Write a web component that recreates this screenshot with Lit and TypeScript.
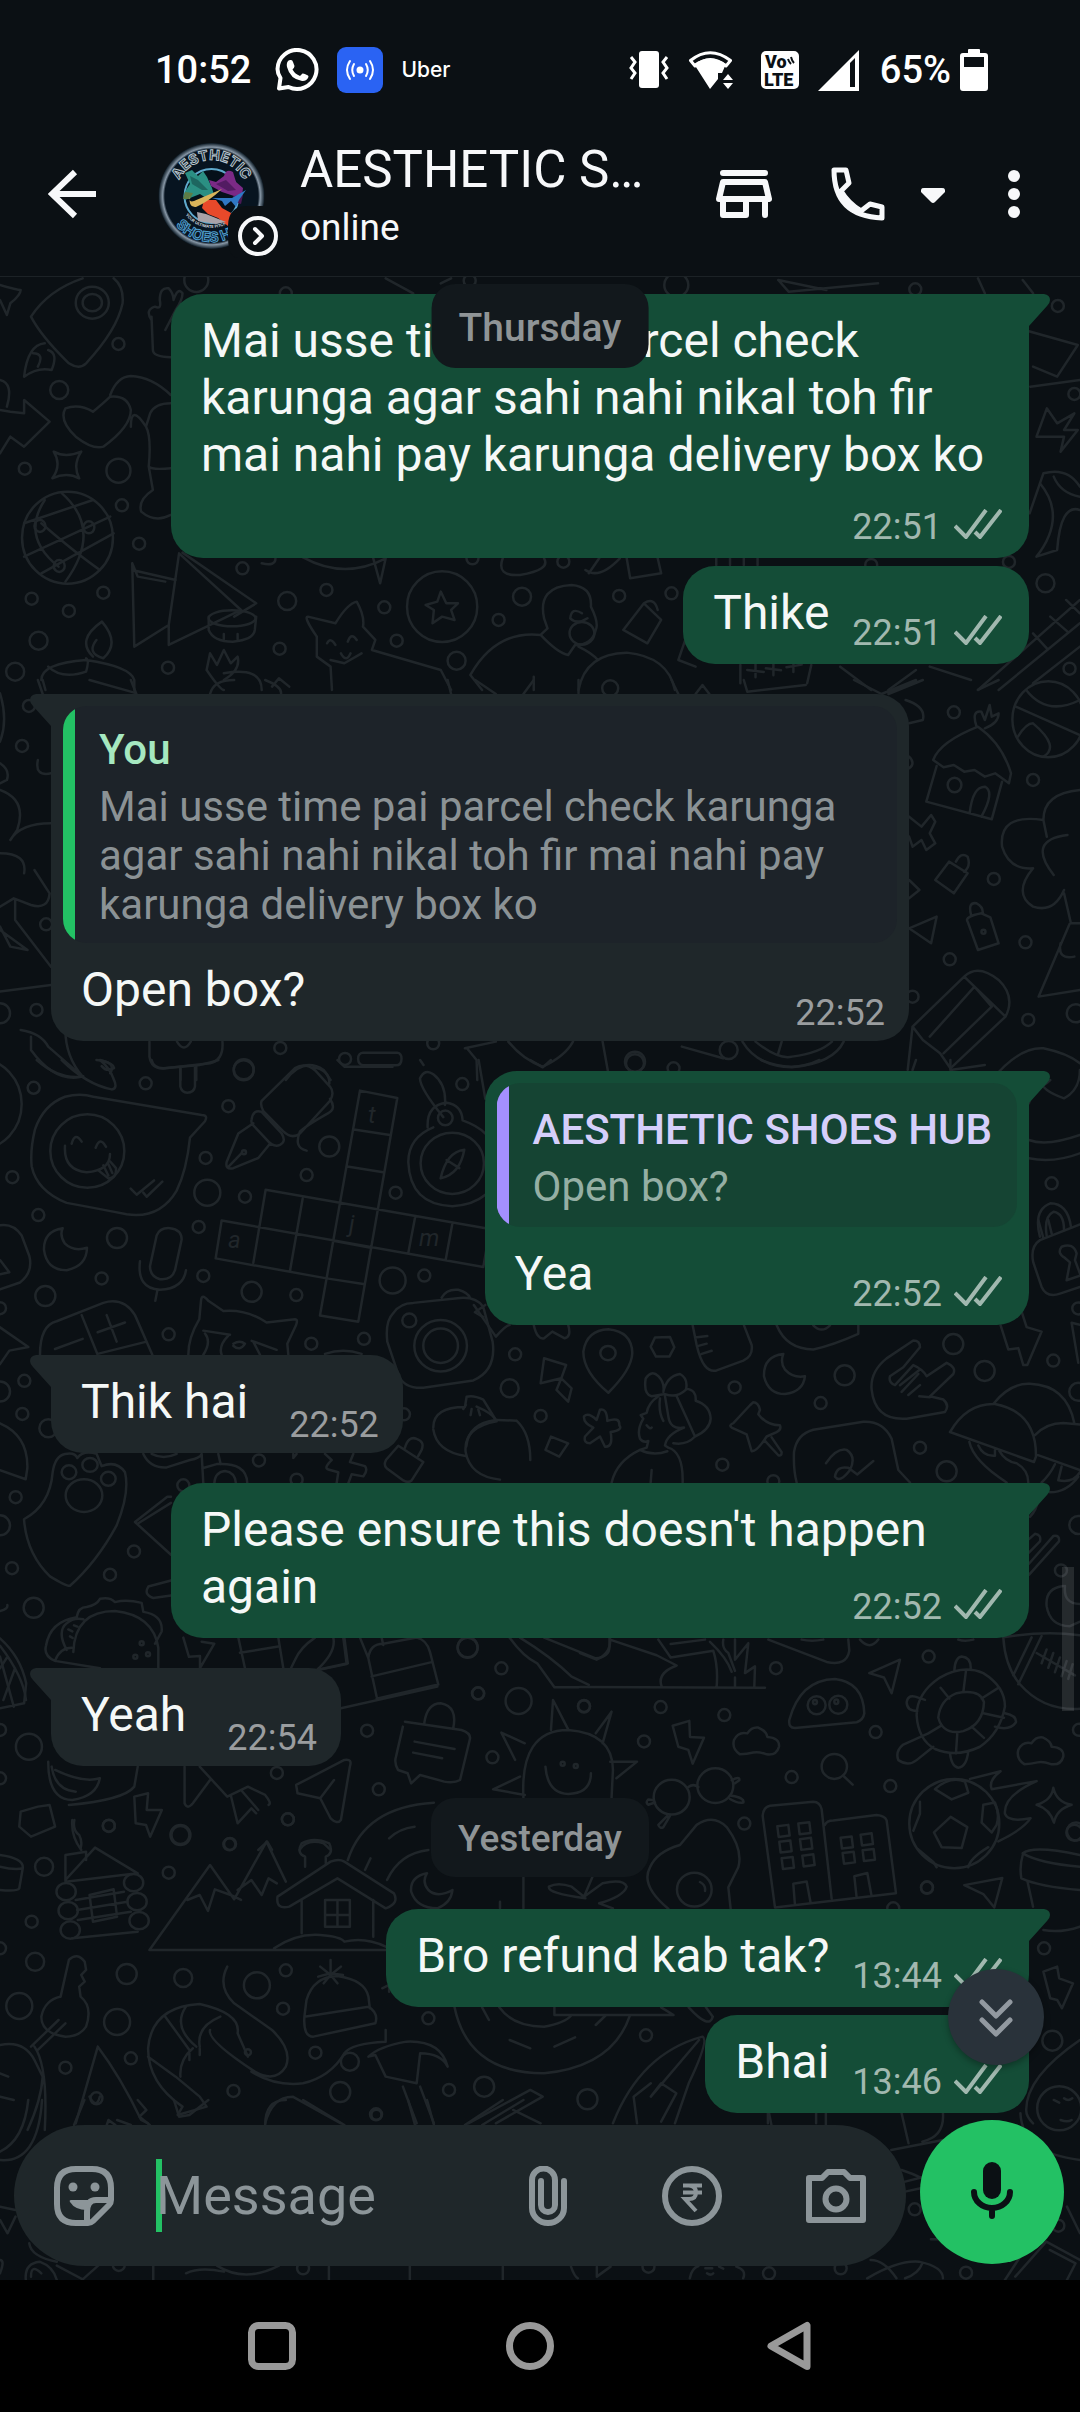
import { LitElement, html, svg, css, nothing } from "lit";
import { customElement, property } from "lit/decorators.js";

interface Quote {
  author: string;
  text: string;
}

interface Message {
  kind: "in" | "out" | "day";
  text: string;
  time?: string;
  tail?: boolean;
  quote?: Quote;
  /** Where the time goes: beside the text, over its last line, or below it. */
  meta?: "beside" | "over" | "below";
}

const MESSAGES: Message[] = [
  {
    kind: "out",
    text: "Mai usse time pai parcel check karunga agar sahi nahi nikal toh fir mai nahi pay karunga delivery box ko",
    time: "22:51",
    tail: true,
    meta: "below",
  },
  { kind: "out", text: "Thike", time: "22:51" },
  {
    kind: "in",
    text: "Open box?",
    time: "22:52",
    tail: true,
    quote: {
      author: "You",
      text: "Mai usse time pai parcel check karunga agar sahi nahi nikal toh fir mai nahi pay karunga delivery box ko",
    },
  },
  {
    kind: "out",
    text: "Yea",
    time: "22:52",
    tail: true,
    quote: { author: "AESTHETIC SHOES HUB", text: "Open box?" },
  },
  { kind: "in", text: "Thik hai", time: "22:52", tail: true },
  { kind: "out", text: "Please ensure this doesn't happen again", time: "22:52", tail: true, meta: "over" },
  { kind: "in", text: "Yeah", time: "22:54", tail: true },
  { kind: "day", text: "Yesterday" },
  { kind: "out", text: "Bro refund kab tak?", time: "13:44", tail: true },
  { kind: "out", text: "Bhai", time: "13:46" },
];

/** One patch of the doodle wallpaper: its origin, its scale and its line art. */
interface Patch {
  x: number;
  y: number;
  sx: number;
  sy: number;
  lines: string;
  rings: number[][];
  ellipses: number[][];
}

const PATCHES: Patch[] = [
  {
    x: 0, y: 270, sx: 0.6887, sy: 0.3333,
    lines: `M120 25Q70 60 45 140Q60 200 100 280Q115 300 125 280Q170 180 178 100Q180 50 165 25
      M65 220Q40 225 35 320Q55 290 75 300Q85 250 70 240M48 250Q65 250 55 290
      M220 150Q210 120 225 110Q235 120 232 90Q232 50 245 55Q252 70 252 90Q258 50 265 70Q265 90 255 120L240 180M220 140L222 240Q222 260 248 262
      M0 45Q25 60 30 60Q30 75 15 100L10 135L0 90
      M135 425Q115 400 95 415Q85 450 110 500Q135 540 150 530Q190 470 190 420Q185 375 160 380Q150 400 135 425M160 375Q170 320 190 318Q220 320 248 375
      M248 400Q225 400 218 430L212 470Q190 400 190 470M212 470Q220 500 216 590Q220 600 248 595M216 590L222 660Q200 690 205 725Q225 760 248 735
      M0 550L15 500L35 530L72 455L35 390V430L15 425L0 420M0 330Q20 340 10 410
      M78 545Q95 565 118 545Q105 585 115 625Q97 605 76 625Q90 585 78 545Z
      M65 690Q30 800 85 890M90 670Q150 780 95 935M35 760L135 690M35 860L160 740M60 910L165 790M60 760Q110 850 145 900
      M192 880L195 1130L245 1065L260 850L350 1020L300 1070L245 1125V1065M192 900L255 930M265 848L372 1000L340 1040M192 880L200 920L240 935
      M303 1040V1080Q310 1115 338 1115Q368 1110 370 1080L372 1040M325 1092v16M345 1092v16
      M60 1230Q60 1180 125 1170Q190 1190 195 1230V1260M62 1230L66 1260M70 1190Q90 1230 125 1205Q130 1170 125 1165
      M135 1160Q110 1110 148 1055Q175 1120 150 1165Q125 1150 140 1110
      M300 1200L305 1150L315 1185L325 1140L335 1180L345 1160Q350 1200 325 1230M300 1200Q320 1260 325 1260M325 1210Q380 1190 380 1260M395 1250L405 1225L420 1250
      M460 1100Q440 1040 447 1040L487 1060Q505 1000 518 995Q530 1040 527 1070L545 1110L540 1140L640 1200L655 1260M460 1100V1160L480 1190L482 1260M475 1120Q480 1100 487 1125M505 1115Q510 1085 518 1110M495 1150q8 30 14 0M480 1170L500 1180L525 1150
      M640 965L648 1000L665 1000L655 1020L660 1050L642 1040L628 1060L630 1020L618 1005L635 995Z
      M790 1045Q780 950 830 945Q860 950 858 1010Q870 1060 865 1080Q860 1125 835 1125L825 1155Q810 1150 785 1095Q720 1080 683 1215L700 1260M790 1045L795 1075L785 1095M840 1130Q860 1150 868 1170M840 1260Q850 1150 910 1148Q970 1160 980 1260M845 1030Q830 1010 828 1045q10 20 25 0M775 1220V1260
      M380 880Q400 890 400 865M440 862Q500 930 560 865L552 940L542 865M730 865Q720 920 755 915Q800 900 790 865M855 910L870 865M850 900Q870 930 900 865M910 865L915 925L960 910L955 865M1040 865V885M1060 865V885M1080 865V885M1100 865V885
      M560 25L600 70M640 40L655 25M1130 30L1145 65L1275 40M1130 30L1200 60M1420 25L1430 70M1470 170L1565 225L1535 320L1500 290M1485 30L1500 70M1496 350L1568 330
      M1505 500L1520 415L1535 460L1560 430L1545 480L1565 480L1540 545L1545 500Z
      M1515 610L1495 730M1515 610Q1550 590 1568 650M1510 640Q1550 740 1505 860L1535 840Q1540 700 1568 720M1530 620Q1540 670 1568 680
      M1568 990L1420 1260M1568 1060L1450 1260M1568 1130L1500 1240M1548 990L1568 1030M1525 1040L1550 1085M1500 1090L1520 1135
      M1075 1185V1240M1178 1185L1172 1240M1085 1200l24 6M1097 1180v42M1112 1195l22 6M1123 1178v38M1142 1192l22 -8M1152 1170v36
      M905 1080L935 1000L960 1050L940 1120ZM935 1000Q950 980 955 1020M985 1170L995 1110M985 1170L1010 1190M1220 1190L1265 1260M1330 1200L1290 1260M1350 1190L1410 1230`,
    rings: [[172, 222], [86, 360, 9], [36, 596], [172, 602, 12], [177, 706], [202, 821], [352, 895], [46, 986], [150, 968], [417, 993, 9], [100, 1023], [56, 1112, 9], [406, 1136], [244, 1193], [474, 960], [558, 1012], [724, 1050], [576, 1112], [758, 980, 9], [663, 1172, 9], [899, 978], [975, 970], [1518, 940, 9], [1329, 58], [1536, 108], [1465, 876], [682, 32], [982, 45, 12], [22, 1205, 9], [1553, 1196], [285, 30, 12], [415, 70], [686, 865], [818, 875], [1265, 885], [1560, 372]],
    ellipses: [[134, 98, 24, 48], [134, 98, 14, 26], [98, 803, 66, 138], [337, 1045, 34, 24], [642, 1010, 51, 106], [845, 1090, 18, 34], [58, 768, 8, 18], [129, 772, 8, 18], [86, 888, 8, 18]],
  },
  {
    x: 0, y: 680, sx: 0.6887, sy: 0.3333,
    lines: `M0 185Q12 120 0 40M0 250Q15 270 10 300L0 310M55 240Q50 290 74 280M0 330Q40 360 25 450L15 480Q30 430 74 430M0 520Q40 520 35 580M50 570L72 640Q70 690 45 675L20 655L0 680M22 660V720L74 860M0 740L15 800L40 810L0 750M0 935L74 915
      M1475 80L1568 165M1490 30Q1520 110 1568 60M1478 170Q1490 130 1500 130Q1540 200 1515 230
      M1355 240Q1365 185 1420 140Q1455 190 1468 280L1465 310L1445 280L1430 290L1415 270L1400 275L1385 255L1370 262ZM1360 258L1345 365L1440 418L1455 305M1408 400Q1412 320 1430 320Q1445 335 1425 410M1418 140Q1410 90 1425 95L1430 120L1437 75L1440 110L1450 100Q1450 130 1430 145
      M1320 410L1338 440L1352 405L1358 425L1350 460L1358 490L1345 510L1338 480L1325 500L1320 470
      M1378 545L1405 580L1385 640L1358 600ZM1388 545Q1395 515 1405 530Q1410 560 1400 575
      M1405 725Q1400 710 1425 700L1438 712L1450 790L1420 810ZM1410 705Q1405 665 1418 670Q1428 680 1427 702
      M1568 330Q1515 340 1515 420Q1450 400 1455 500Q1465 570 1500 565Q1470 640 1500 680Q1530 700 1545 630M1515 420L1520 470M1550 465Q1490 480 1530 585M1545 640L1555 730H1568M1553 732L1508 950L1568 930M1540 790q-5 50 20 40
      M1325 1040L1400 890Q1420 850 1450 900Q1475 950 1460 1010L1380 1165L1365 1120L1340 1080L1325 1040L1318 1170M1350 1070L1415 920L1440 980L1370 1120M1400 890L1460 1010
      M1320 745L1360 710L1352 790ZM1315 60Q1345 80 1340 120L1320 130M1320 230Q1330 250 1320 265M1320 600L1335 630L1320 655
      M30 1050Q60 1060 70 1100L120 1190Q80 1210 45 1110V1070M95 1050Q95 1130 120 1190M140 1140Q170 1145 160 1180
      M217 1085V1130Q220 1170 240 1165L305 1150Q325 1140 323 1085M262 1165V1200M285 1160V1200M257 1085q10 35 20 0
      M527 1118H577Q583 1120 583 1136Q583 1156 575 1156H528Q520 1154 520 1136Q520 1120 527 1118Z
      M675 1105L720 1085M678 1105L692 1140L693 1200M738 1085Q760 1140 788 1160Q820 1130 832 1085M875 1085L885 1200M990 1100L1050 1135M1078 1085Q1100 1160 1150 1162Q1210 1150 1225 1085M1097 1085Q1130 1140 1150 1130Q1190 1120 1208 1085M1135 1085L1130 1120M1440 1200Q1480 1100 1515 1105Q1550 1120 1568 1150M415 1200Q440 1130 470 1170L480 1200
      M55 0L62 42M190 0L198 42M305 42Q310 0 340 0M385 0Q410 20 408 42M1080 0L1085 35L1170 15M1240 0L1280 42L1330 0M1290 42L1340 0M690 0L720 42M650 0L655 42M760 42L775 0M840 0V40M975 0L985 42M1010 42L1020 15L1030 42M1420 30L1450 0
      M130 0L195 38`,
    rings: [[32, 198], [67, 733], [53, 990], [407, 1104], [354, 1168, 10], [501, 1137], [629, 1090], [922, 1145, 10], [1058, 1110, 9], [978, 1165], [1385, 97], [1500, 300], [1443, 597], [1489, 787], [1379, 838], [1493, 1020], [1325, 950], [0, 1000, 10], [886, 25, 8], [1562, 1000, 9], [1428, 755, 2], [42, 78]],
    ellipses: [[1522, 118, 52, 114], [1386, 315, 10, 22]],
  },
  {
    x: 0, y: 1060, sx: 0.3333, sy: 0.4082,
    lines: `M195 90Q130 110 105 170Q90 220 95 260Q110 320 200 350Q300 365 380 378Q480 390 530 320Q560 270 570 190L615 150Q625 135 605 135L280 90Q240 80 195 90Z
      M195 210Q190 270 260 275Q330 270 330 230M215 205Q225 175 245 200M287 215Q300 185 318 213M295 270L325 290Q350 290 348 265L330 248M310 258l15 25M325 255l12 22M392 315L410 330L462 295M430 325L440 335L487 298
      M110 0Q180 50 250 40M185 0Q260 60 335 72Q355 70 340 45Q330 20 300 0M300 0Q345 10 342 20Q320 30 305 15
      M455 0Q460 20 490 20L600 12Q640 5 655 0M541 18V65Q545 80 562 80Q582 80 585 65V14
      M785 100L885 20Q915 5 945 25L990 65Q1005 80 990 100L900 180Q875 195 850 175L790 125Q780 110 785 100M755 145Q760 120 785 127L845 180Q860 200 840 208Q820 215 800 195L760 160Q752 155 755 145ZM760 155L715 180L680 250Q675 270 700 265L775 240L810 205M685 262L725 228M940 18Q990 25 988 58M990 95Q1010 120 985 130Q920 160 900 175Q880 215 920 222
      M1080 75L1192 93L1075 641L960 626ZM1062 170L1170 184M1042 261L1150 275M1000 443L1112 460M980 535L1090 549
      M797 318L1470 414M665 393L1450 507M647 486L980 535M797 318L760 497M908 340L870 517M1245 387L1225 473M1357 402L1337 490M1470 414L1450 507M665 393L647 486
      M1300 165Q1225 190 1225 250Q1230 355 1357 358Q1420 355 1456 330M1283 165Q1280 110 1340 105Q1385 110 1388 148Q1430 160 1456 180M1330 140Q1260 70 1260 45Q1275 20 1300 35Q1340 60 1335 110M1393 220Q1340 225 1322 290Q1380 280 1393 220ZM1340 245L1378 265
      M188 412Q130 420 132 465Q140 515 200 515Q260 505 261 460Q220 470 195 450Q178 430 188 412Z
      M470 430Q480 410 510 412Q545 415 545 440L525 515Q515 540 480 537Q450 530 450 505ZM420 493Q410 560 480 563Q550 560 558 515M472 565L466 590
      M120 722Q120 650 170 640L310 595Q370 580 405 625L457 722M245 625L293 722M293 720L440 690M165 708L248 683M320 625L350 690M293 667L375 643
      M0 405Q40 400 65 430L88 480Q100 520 60 545L0 562M0 490L28 520L0 525M0 655L85 703L28 712L0 745
      M565 722Q565 680 598 635L603 590Q605 570 625 590L670 615Q740 610 800 643L885 635Q895 635 888 650L862 695L865 722M610 663L690 673M615 670Q635 690 610 722M685 675Q655 700 665 722M755 688L830 710M760 690L780 722M700 695Q720 685 735 695Q720 715 700 700
      M1180 620Q1200 595 1240 595L1380 583Q1430 580 1450 605L1478 690Q1490 760 1420 785L1270 803Q1210 805 1195 770L1162 690Q1155 640 1180 620M1325 582Q1340 560 1375 563Q1405 570 1410 583M1456 600L1425 618L1450 630
      M975 720Q1030 705 1085 720M1300 900Q1300 850 1395 850L1400 825Q1420 820 1450 832L1490 885M1300 905Q1310 960 1397 970M1490 885Q1390 900 1397 960Q1410 1020 1500 1028M1390 855l8-10M1412 870l3-15M1440 870l-5-14
      M1195 945L1270 985L1235 1030Q1225 1037 1210 1030L1160 1000Q1150 992 1158 980ZM1215 950Q1225 920 1250 928Q1275 935 1265 955L1255 970
      M975 965L995 980Q970 1000 985 1003L1015 1010L1010 1037M1060 965L1050 985L1095 995Q1105 1005 1090 1020L1055 1015L1045 1037
      M72 1125Q150 1090 158 1010Q165 970 195 965Q225 960 232 975Q250 955 290 965L305 995Q350 980 375 1010Q390 1060 350 1140Q290 1230 210 1288Q200 1290 150 1265Q80 1210 72 1125Z
      M220 1450Q225 1350 345 1350Q460 1360 475 1440V1490M165 1472L300 1490M165 1472Q130 1460 138 1435Q150 1375 230 1365Q235 1340 260 1340Q290 1335 300 1320Q330 1315 345 1328Q380 1320 425 1330L430 1352Q490 1360 485 1400L465 1430M165 1472Q180 1440 215 1440M200 1445Q170 1400 200 1380Q220 1365 250 1370M205 1395l12 5M222 1385l10 3M210 1412l8 4
      M0 890Q85 920 82 1000L77 1027L0 1005M0 1435Q70 1510 78 1568M20 1465L0 1490M45 1490L10 1568
      M513 1070H502L405 1132L513 1212M415 1135L513 1085M513 1275L445 1290Q430 1310 460 1318L513 1312
      M430 965Q450 1000 500 998L570 980Q600 975 605 965L610 1037M607 1000L650 990Q740 985 742 1037M643 1037Q645 1010 675 1007Q705 1010 708 1037M655 965L662 990M455 965Q490 980 530 965M0 1350Q25 1345 22 1335M880 965V975L890 965
      M550 1415L567 1462L600 1460V1490L643 1430L605 1425M715 1415L735 1490M835 1415L850 1490M720 1452L835 1437M945 1415Q900 1440 885 1470L870 1495M1000 1415Q1010 1450 950 1495L1040 1480L1030 1415M1080 1415L1105 1465Q1110 1430 1150 1430L1250 1415Q1280 1420 1290 1450L1315 1530L1130 1565M1105 1465L1130 1560M1115 1510L1295 1475M1145 1415l5 18
      M1436 0L1456 95`,
    rings: [[101, 68], [437, 57], [731, 25, 10], [685, 113], [617, 240], [37, 287], [115, 380], [622, 325, 13], [735, 335], [920, 282], [988, 212, 10], [1387, 59], [1187, 325], [351, 436, 10], [596, 409], [610, 529], [305, 535], [136, 578, 10], [755, 568, 10], [889, 576], [1178, 540, 13], [1273, 528], [506, 672], [934, 695], [1092, 683], [73, 786], [67, 867], [145, 902, 9], [777, 981], [550, 1042], [890, 1028], [47, 1071], [402, 1204], [330, 1261], [36, 1245], [101, 1342, 10], [1403, 1440, 10], [1435, 1552], [0, 608], [0, 812, 10], [0, 1140, 10], [1212, 868], [425, 1429, 2], [406, 1462, 2], [444, 1456, 2], [732, 226, 2]],
    ellipses: [[262, 223, 111, 90], [1357, 253, 95, 75], [1336, 142, 22, 18], [1322, 700, 79, 63], [1322, 700, 52, 42], [1228, 638, 21, 17], [252, 1067, 55, 40], [207, 1010, 22, 17], [270, 992, 23, 17], [325, 1026, 22, 17], [-60, 108, 125, 110]],
  },
  {
    x: 0, y: 1060, sx: 0.6887, sy: 0.3333,
    lines: `M775 795Q780 840 790 835L802 815L820 835Q830 830 825 795M790 895L822 915L815 955L785 970ZM815 955L830 985L825 1025L808 990Z
      M688 735L720 830Q735 795 740 795M722 1080L750 1082M750 1082Q770 1120 770 1200M800 1130L825 1150L812 1190L792 1170ZM692 1040Q715 1060 720 1080Q680 1090 677 1160
      M1494 100Q1515 80 1525 60M1512 60Q1510 90 1545 115Q1568 90 1568 30M1494 240Q1520 260 1568 225M1494 295Q1530 310 1568 280
      M1510 530Q1500 450 1525 430Q1550 430 1555 500M1520 530Q1515 470 1530 455Q1545 460 1545 510M1494 130L1500 90
      M490 0L500 20H570M610 0L615 15M770 0L788 22L800 0M1105 0Q1150 40 1190 0M1330 0L1325 30M1380 0V30L1430 15`,
    rings: [[1527, 370], [785, 1068], [740, 985, 9], [748, 883], [922, 10, 9]],
    ellipses: [],
  },
  {
    x: 580, y: 1220, sx: 0.3333, sy: 0.4464,
    lines: `M85 387Q10 340 10 295Q20 247 85 245Q155 250 157 298Q155 335 85 387ZM225 263L270 262L283 285L268 306L228 306L212 284Z
      M338 236L350 280Q370 345 410 337L490 315Q520 305 515 280L492 236M345 263L382 260M355 282L380 277M365 300L395 293
      M610 300Q550 305 552 350Q565 390 615 390Q670 385 675 350Q640 355 615 335Q600 320 610 300ZM590 236Q620 290 700 290Q760 280 835 255V236M700 236Q725 255 750 236
      M60 425Q80 420 82 450Q120 440 118 460Q130 470 92 475Q100 510 75 508L60 485L30 500Q10 500 15 485L40 465Q10 455 12 440Q25 430 50 448Z
      M215 395Q190 390 197 355Q215 335 235 350Q255 365 250 385Q260 350 300 345Q325 355 318 380Q290 400 255 390L215 395M235 395Q205 410 200 432L182 437L190 445Q170 470 180 490Q190 500 205 495L200 510L180 515Q110 540 95 588M255 395L265 440Q270 470 312 465Q260 480 255 505L265 510Q310 520 308 588M290 395L345 485Q320 505 280 500M318 378Q350 380 347 405Q390 415 392 445Q390 470 345 485M180 515Q220 530 262 518M215 560L212 588M200 460q10 10 15 5M240 400Q235 430 250 450
      M520 408Q535 408 540 425L535 435Q560 460 600 460Q605 470 590 475L560 485Q530 520 515 518L500 480L455 465Q445 460 460 455L510 415ZM555 495L595 527Q605 530 605 520L575 487
      M875 380Q870 340 920 310L1000 270Q1020 270 1020 285L970 330L930 350Q925 365 945 370L1000 325Q1030 335 1040 350L1100 320Q1130 330 1120 345L1050 395L1090 402Q1110 415 1095 430L980 445Q885 450 875 380M960 370L1020 335M965 385L1015 345M985 392L1020 370M1018 395L1050 397
      M650 588Q640 560 642 520Q650 480 700 470L850 452Q910 450 935 490L955 560L990 588M738 545Q770 510 800 515Q830 530 810 560Q780 590 765 575Q770 550 805 555L832 570L880 540
      M1110 475Q1160 410 1245 412Q1370 430 1368 530L1362 542L1110 475M1240 412Q1290 365 1350 367Q1460 370 1483 455M1365 482Q1400 455 1450 455L1500 458M1368 525L1500 560M1168 497Q1180 540 1280 588M1195 505Q1210 530 1245 528V515M1258 517Q1275 540 1310 545Q1345 560 1345 588M1500 565Q1480 590 1435 583L1445 552M1425 547Q1410 570 1385 588M1410 610Q1460 610 1495 575
      M1375 0L1390 40M1405 0L1415 30M1500 10L1380 45Q1350 60 1360 95L1385 150Q1400 175 1440 165L1500 150M1455 85Q1430 75 1445 60Q1480 50 1490 75L1485 90L1500 120M1455 85L1470 95L1460 135L1500 125M1262 236L1285 290L1315 287L1330 325H1342L1385 250L1340 240L1325 205M1500 235L1475 230L1495 320
      M1350 665Q1370 650 1375 625M1347 715L1365 703Q1385 705 1380 720L1347 745M1347 770L1420 708Q1440 705 1437 720L1347 795M1450 820Q1395 825 1400 865Q1410 910 1470 910L1500 900M1455 820Q1450 860 1500 860
      M1270 935Q1390 920 1500 930M1270 935Q1275 1000 1320 1040Q1390 1100 1500 1095M1355 935L1300 1020M1385 932L1315 1040M1370 970L1485 1020M1400 962L1385 993M1420 970L1405 1003M1440 980L1425 1013M1460 988L1445 1022M1478 995L1465 1028
      M0 1046L555 1048M90 936Q95 970 50 985L0 970M90 940L230 975L290 998Q230 1015 245 1045M235 940L272 980L400 965Q415 1000 410 1045M272 950L375 940M390 945Q440 980 455 1012M430 940Q425 960 445 970L465 1010M465 940V985L505 948L495 1015L525 1000L523 1045M465 1025V1045
      M565 940L740 990Q800 1000 808 965L805 940M665 940Q695 945 730 940M840 940Q870 965 895 940M1135 940Q1155 945 1180 940M868 1015L960 985L935 1060L912 1025Z
      M628 1120Q660 1030 765 1028Q850 1035 853 1105Q850 1120 830 1125L645 1138Q625 1138 628 1120Z
      M1010 1110Q1010 1060 1080 1025Q1150 995 1210 1015Q1275 1045 1275 1090Q1260 1150 1200 1180Q1130 1205 1065 1185Q1015 1165 1010 1110ZM1075 1115Q1080 1075 1130 1060Q1200 1050 1212 1080Q1210 1130 1150 1145Q1090 1155 1075 1115ZM1082 1048L1108 1072M1158 1010L1150 1058M1255 1048L1205 1072M1272 1115L1210 1105M1212 1160L1175 1135M1128 1195L1132 1150M1045 1150L1085 1132M1012 1100Q980 1100 980 1080Q985 1060 1015 1070L1035 1075M1123 1010Q1125 980 1145 978Q1175 980 1172 1008M1275 1105Q1310 1110 1308 1125Q1290 1145 1245 1135M1110 1195Q1115 1225 1135 1227Q1160 1225 1165 1190M1045 1150L970 1175Q945 1190 955 1210Q985 1225 1010 1210L1060 1180
      M480 1197Q455 1185 462 1165Q475 1145 502 1150Q515 1135 535 1137Q560 1145 562 1158Q600 1160 597 1180Q590 1200 560 1197Q535 1190 520 1193Q500 1197 480 1197Z
      M1333 1219Q1308 1207 1315 1187Q1328 1167 1355 1172Q1368 1157 1388 1159Q1413 1167 1415 1180Q1453 1182 1450 1202Q1443 1222 1413 1219Q1388 1212 1373 1215Q1353 1219 1333 1219Z
      M278 1133L328 1122L330 1158L372 1160L338 1218L325 1187L295 1180ZM790 1245L818 1265
      M325 1270Q340 1262 355 1270M455 1255Q480 1245 478 1255L465 1262M455 1290Q495 1295 490 1305Q475 1308 450 1297M222 1300L205 1298Q195 1305 205 1310L225 1305M262 1335L235 1355Q240 1365 250 1360L270 1335
      M585 1540L548 1335Q550 1315 570 1312L700 1303Q720 1303 725 1320L755 1520M735 1355Q740 1345 760 1345L890 1333Q915 1335 920 1345L948 1508L585 1540M645 1535L640 1487L680 1482L692 1530M830 1518L823 1470L862 1463L875 1515
      M592 1358l33-3l4 24l-33 3zM655 1352l33-3l4 24l-33 3zM598 1393l33-3l4 24l-33 3zM660 1387l33-3l4 24l-33 3zM605 1430l33-3l4 24l-33 3zM667 1424l33-3l4 24l-33 3zM782 1384l33-3l4 24l-33 3zM842 1377l33-3l4 24l-33 3zM788 1418l33-3l4 24l-33 3zM848 1412l33-3l4 24l-33 3z
      M1112 1337L1162 1360L1145 1407L1085 1405L1062 1372ZM1065 1275Q1110 1245 1155 1258L1165 1283L1115 1298ZM1210 1310L1245 1305Q1260 1330 1250 1355L1235 1372L1205 1350ZM1020 1303V1330L1000 1368M1015 1410L1060 1438L1070 1450M1165 1450Q1170 1430 1225 1405
      M1170 1252L1262 1235Q1225 1255 1235 1275L1370 1257Q1270 1290 1275 1330Q1285 1350 1352 1340Q1330 1365 1255 1392M1420 1272Q1430 1305 1475 1310Q1430 1320 1422 1350Q1410 1320 1370 1310Q1415 1300 1420 1272Z
      M265 1543Q180 1490 210 1450Q230 1415 300 1400L350 1355Q400 1330 440 1360Q490 1410 475 1450L445 1495L452 1543M360 1483Q378 1490 375 1503M1153 1490L1267 1474L1243 1540L1210 1510Z`,
    rings: [[464, 375], [794, 348, 10], [722, 410], [1120, 278, 10], [1214, 338, 10], [1420, 315], [427, 548], [1020, 510], [1100, 563, 10], [580, 585], [588, 1004], [1046, 978], [1443, 785], [887, 1147], [242, 1091], [433, 1109], [192, 1168], [635, 1248], [931, 1268], [493, 1352], [1041, 1496], [1495, 385, 9], [1497, 1142], [1488, 1370, 9], [1495, 683, 9], [1495, 198], [12, 1090]],
    ellipses: [[84, 298, 23, 16], [710, 1087, 27, 20], [775, 1086, 27, 20], [705, 1080, 6, 5], [769, 1079, 6, 5], [763, 1224, 38, 28], [275, 1293, 54, 39], [406, 1267, 54, 39], [1123, 1352, 135, 100], [343, 1500, 52, 38]],
  },
  {
    x: 0, y: 1450, sx: 0.6887, sy: 0.3333,
    lines: `M760 1043Q755 840 825 840Q890 850 890 960L888 1043M800 840L803 750L825 838M865 850L888 785L875 880M762 880L728 848L748 930M755 980L716 1018L762 1035M792 950Q795 1030 825 1032Q858 1030 858 970M886 935L925 935L895 985
      M588 815L670 840Q685 850 682 870L668 990Q660 1000 645 995L610 975L597 1000L592 970L578 960Q572 940 575 920L585 830M616 820Q620 760 640 760Q665 770 658 835M602 875L660 897M600 908L642 925
      M70 935Q70 1050 105 1050Q140 1040 145 985Q120 1000 80 960M75 950Q80 1020 110 1025M100 1065Q180 1050 195 1010L200 950M268 950V1060Q272 1080 280 1060L305 990M290 950L330 1040L360 1010L385 1035Q395 1060 390 1065M335 1035L345 1120L365 1075L372 1090M350 1020L375 1080
      M430 1005L500 930Q512 925 508 950L495 1110Q490 1125 480 1105L465 1045L432 1030ZM465 1045L485 990
      M195 1040L215 1030L213 1080H235L218 1160L212 1125L197 1120ZM30 1085L55 1070L72 1065L80 1130L45 1160L28 1130ZM105 1110Q103 1160 118 1200
      M740 563Q760 620 780 640L805 712H840M755 563Q800 620 830 680L855 705M790 563L865 625Q885 620 885 590V563M460 660L505 640L500 563M495 775L635 710
      M0 565Q30 620 38 700L35 760L0 775M0 620L20 770M435 1200Q445 1165 470 1180L480 1200M375 1200L388 1175L395 1200`,
    rings: [[728, 655], [694, 730], [753, 753, 13], [848, 768], [533, 842], [715, 922], [550, 1018], [42, 890, 13], [402, 969], [418, 1108], [158, 1128], [262, 1155, 9], [333, 1183], [679, 592, 10], [817, 941, 2], [836, 948, 2], [0, 840], [0, 985]],
    ellipses: [],
  },
  {
    x: 0, y: 1800, sx: 0.6887, sy: 0.3333,
    lines: `M95 240L138 143L200 220L95 245V165L125 155V180M110 300L180 275M112 330L185 305M113 360L190 335M105 415L200 395M130 285L165 268L170 350L135 365ZM108 60Q105 90 115 105Q120 125 117 145
      M217 450L305 195L340 298L387 125L415 245M217 450H560M272 300L290 285L302 333L312 268L335 285L350 300M345 270L365 240L380 285L390 235L402 250
      M403 290L480 185Q492 175 500 185L572 280Q580 310 560 325L490 235L420 320Q400 330 403 290ZM438 300V400M542 300V410M443 200V170Q430 160 438 130Q455 110 478 130Q485 160 473 170V190M472 300H508V380H472ZM490 300V380M472 345H508M398 445Q430 400 465 405Q495 410 500 425Q530 410 560 440
      M505 180Q530 20 630 8M562 240Q580 160 622 150M565 115Q580 85 602 80M530 210L538 175M620 220Q595 230 597 275Q605 325 635 325Q655 310 657 270Q635 295 622 270Q612 245 620 220
      M760 232V325M726 325V305M850 295Q795 280 797 260Q810 245 830 260L848 290L860 232M848 290L875 250Q905 235 910 260Q905 290 870 310L890 325
      M0 165Q35 175 33 205L28 265Q25 275 0 270M0 200Q20 210 33 205
      M88 590L100 480Q112 455 123 485L125 510L118 525L123 545L115 560L117 590Q135 620 125 680Q115 710 95 710Q60 700 60 650Q65 600 88 590M95 670L55 750M85 660L45 740
      M330 500Q315 560 340 610L395 690Q425 750 415 800Q400 850 370 815Q300 720 305 690M365 815Q400 860 440 850Q480 830 500 760Q510 730 560 725V690
      M442 650L445 600Q455 530 490 528Q530 540 535 590L537 625M442 650L535 620Q550 640 545 670L455 710Q440 710 442 650M465 500L480 525L495 500M462 530L480 520V480M480 520L498 525M470 550L480 525L490 550
      M215 745Q220 620 290 612Q350 640 345 700L360 770M215 745Q215 850 265 920L258 945L300 920L290 890L255 830L215 770M240 650L275 750M270 620Q250 680 285 740M320 650Q285 680 290 740M280 745Q260 780 262 830M275 780v-20M290 765v-20
      M142 740L110 970M142 740Q175 830 205 960L215 970M130 890q10 40 15 0M0 735Q35 720 50 780L62 830Q60 900 40 990M50 740Q70 800 65 990M0 890L20 900M0 820l12 10
      M535 770L545 765L560 830L605 850L610 760Q640 760 650 800Q640 720 590 725Q550 740 535 770M585 860L605 970M610 860L630 970
      M660 622Q680 820 790 820Q890 800 915 645M725 622Q745 680 790 680Q820 670 830 645M740 720L770 745M805 740L835 712M805 622V645H978L960 622M865 675L880 645M700 622L710 660
      M1000 622Q1030 690 1035 650L1025 622M890 970Q930 760 1020 710Q1030 720 1000 850L980 970M1015 720L945 890L960 850L982 880L960 965M945 850L920 890L925 970
      M680 970L770 870L788 890L720 970M745 930L785 970M385 970Q395 890 425 890L495 970M555 565L565 555V575
      M1515 515L1535 500L1538 535L1558 550L1542 625L1535 600L1525 595ZM1490 930Q1490 830 1568 720M1490 930Q1490 950 1500 970M1530 900l8 8M1545 895q6 10 12 0M1540 960q10 8 16 0
      M1485 165Q1480 200 1483 235Q1510 260 1568 270M1485 160Q1500 135 1568 165M1485 160Q1510 190 1568 200M1492 245L1500 320M1515 390Q1540 400 1568 380M1115 940V970M1185 940V970`,
    rings: [[158, 77], [262, 105, 10], [334, 132], [418, 58], [64, 200, 9], [245, 218], [46, 365], [51, 485, 9], [184, 522, 10], [266, 534, 9], [415, 511], [373, 556, 13], [411, 626], [28, 618, 13], [170, 666, 13], [190, 775], [95, 803], [458, 758], [508, 785, 9], [622, 655], [339, 873], [494, 876, 10], [546, 943], [652, 870], [703, 860, 10], [853, 898, 10], [938, 706], [1528, 722, 10], [1516, 445], [1346, 262], [0, 445], [1297, 325], [1560, 98, 8], [360, 757, 3]],
    ellipses: [[96, 275, 14, 26], [194, 248, 14, 26], [99, 332, 14, 26], [199, 305, 14, 26], [102, 390, 14, 26], [202, 362, 14, 26], [1538, 925, 32, 66]],
  },
  {
    x: 0, y: 2100, sx: 0.3444, sy: 0.3333,
    lines: `M85 430Q90 470 165 485M75 540Q70 490 115 485Q155 500 165 540M90 530Q90 490 120 520M165 497L240 538L285 497M445 497V540M540 520Q580 500 650 515M1190 497V540M1460 500V540M630 497Q710 550 810 497M955 500V540M0 320L45 330M45 350L22 400L0 360M0 480Q15 480 0 520
      M0 180Q110 190 122 0M0 155Q70 120 82 0M215 75L245 0M400 0L425 30L405 50L435 75M310 75L315 60L335 75M340 60L380 75M505 0L520 50L550 45L605 0M770 75Q770 0 830 0M880 0L1000 75M1185 0L1205 75M1240 0L1260 75M1350 75L1460 0M1400 75L1520 0`,
    rings: [[345, 495], [880, 505], [1093, 44, 5], [280, -5]],
    ellipses: [],
  },
  {
    x: 540, y: 1940, sx: 0.3444, sy: 0.3333,
    lines: `M1020 630L1170 600M1050 690Q1080 700 1110 715M1060 725L1110 712M1060 755L1105 745M1170 520Q1175 590 1110 605M1050 520L1070 610M830 555V520M665 520L672 555M1135 898H1180M1350 1020L1420 910M1380 1010L1470 905L1568 960M1480 930L1555 970L1530 1020M1530 800L1568 880
      M1395 520Q1400 640 1568 660M960 960Q1000 960 1035 1015M950 1015Q1040 960 1100 965Q1170 980 1170 1015M1110 970Q1100 1000 1060 1015M90 980Q100 1010 110 1015M165 980V1010L205 980M435 1015Q440 985 460 978M570 980Q600 990 590 1015M480 985h20M520 980l12 6M485 1000q10 8 18 0`,
    rings: [[1088, 808], [1505, 857], [1237, 998], [665, 1000], [873, 985], [315, 980]],
    ellipses: [],
  },
];

@customElement("doodle-wallpaper")
export class DoodleWallpaper extends LitElement {
  static styles = css`
    :host {
      display: block;
      overflow: hidden;
    }
    .art {
      display: block;
      width: 100%;
      height: 100%;
      fill: none;
      stroke: #20262a;
      stroke-width: 2.5;
      stroke-linecap: round;
      stroke-linejoin: round;
    }
    .art path,
    .art ellipse {
      vector-effect: non-scaling-stroke;
    }
    .letter {
      font: italic 24px Roboto, sans-serif;
      fill: #20262a;
      stroke: none;
    }
  `;

  render() {
    return html`<svg class="art" viewBox="0 277 1080 2003" preserveAspectRatio="xMidYMin slice" aria-hidden="true">
      ${PATCHES.map(
        (p) => svg`
          <g transform="translate(${p.x} ${p.y}) scale(${p.sx} ${p.sy})">
            <path d=${p.lines}></path>
            ${p.ellipses.map(([cx, cy, rx, ry]) => svg`<ellipse cx=${cx} cy=${cy} rx=${rx} ry=${ry}></ellipse>`)}
          </g>
          ${p.rings.map(
            ([cx, cy, r = 6]) => svg`<circle cx=${p.x + cx * p.sx} cy=${p.y + cy * p.sy} r=${r}></circle>`
          )}`
      )}
      <g class="letter">
        <text x="368" y="1123">t</text>
        <text x="228" y="1248">a</text>
        <text x="349" y="1232">j</text>
        <text x="419" y="1246">m</text>
      </g>
    </svg>`;
  }
}

@customElement("status-bar")
export class StatusBar extends LitElement {
  static styles = css`
    :host {
      display: flex;
      align-items: center;
      height: 140px;
      box-sizing: border-box;
      margin-bottom: -2px;
      padding: 0 92px 0 155px;
      color: #fff;
      font: 500 38px/46px Roboto, sans-serif;
    }
    svg {
      display: block;
      flex: none;
    }
    .side {
      display: flex;
      align-items: center;
    }
    .left {
      gap: 18px;
    }
    .right {
      gap: 19px;
      margin-left: auto;
    }
    .level {
      display: flex;
      align-items: center;
      gap: 9px;
      margin-left: 2px;
    }
    .time {
      margin-right: 6px;
    }
    .app {
      font: 500 21px/26px Inter, sans-serif;
    }
    .mark {
      font: 900 18px Roboto, sans-serif;
      fill: #0b1014;
    }
  `;

  render() {
    return html`
      <div class="side left">
        <span class="time">10:52</span>
        <svg width="44" height="44" viewBox="0 0 44 44" fill="none">
          <path d="M4 40.500L5.500 30Q2.500 25.500 2.500 21A19.500 19.500 0 1 1 13.500 39Z" stroke="#fff" stroke-width="4" stroke-linejoin="round"></path>
          <path d="M12 15Q13 11.500 16 12Q17.500 12 18 14L19.500 18Q19.500 19.500 17.500 21.500Q20 26 25 28L27.500 25.500Q28.500 25 33 27.500Q34 28 33 30Q31 33.500 27 33Q15 31 12 19Q11.500 17 12 15Z" fill="#fff"></path>
        </svg>
        <svg width="46" height="46" viewBox="0 0 46 46" fill="none" stroke="#fff" stroke-width="2" stroke-linecap="round">
          <rect width="46" height="46" rx="9" fill="#2a63f3" stroke="none"></rect>
          <circle cx="23" cy="23" r="3.500" fill="#fff" stroke="none"></circle>
          <path d="M17 17Q13.500 23 17 29M29 17Q32.500 23 29 29M13 14Q7 23 13 32M33 14Q39 23 33 32"></path>
        </svg>
        <span class="app">Uber</span>
      </div>
      <div class="side right">
        <svg width="40" height="38" viewBox="0 0 40 38" fill="none" stroke="#fff" stroke-width="3">
          <rect x="10" y="0" width="20" height="37" rx="3" fill="#fff" stroke="none"></rect>
          <path d="M2 6L6 11L2 17L6 22L2 28M38 6L34 11L38 17L34 22L38 28"></path>
        </svg>
        <svg width="54" height="38" viewBox="0 0 54 38" fill="none">
          <path d="M2.500 9.500Q22 -6 42.500 9.500L38 15Q22 2 7 15Z" stroke="#fff" stroke-width="3" stroke-linejoin="round"></path>
          <path d="M6 13Q22 2 38 13L34 22H30V28L22 38Z" fill="#fff"></path>
          <path d="M35 29L40 23L45 29ZM35 32L40 38L45 32Z" fill="#fff"></path>
        </svg>
        <svg width="38" height="38" viewBox="0 0 38 38">
          <rect width="38" height="38" rx="5" fill="#fff"></rect>
          <text class="mark" x="4" y="17">Vo</text>
          <text class="mark" x="3" y="35">LTE</text>
          <path d="M27 8Q28 11 30 13M30 6Q31 10 33 12" stroke="#0b1014" stroke-width="2" fill="none"></path>
        </svg>
        <svg width="41" height="41" viewBox="0 0 41 41">
          <path d="M0 41L41 0V41Z" fill="#fff"></path>
          <path d="M32 13L37 8V37H32Z" fill="#0b1014"></path>
        </svg>
        <div class="level">
          <span>65%</span>
          <svg width="28" height="42" viewBox="0 0 28 42">
            <path d="M8 4V1Q8 0 9 0H19Q20 0 20 1V4H25Q28 4 28 7V39Q28 42 25 42H3Q0 42 0 39V7Q0 4 3 4Z" fill="#fff"></path>
            <rect x="4" y="8" width="20" height="10" fill="#0b1014"></rect>
          </svg>
        </div>
      </div>
    `;
  }
}

@customElement("chat-header")
export class ChatHeader extends LitElement {
  static styles = css`
    :host {
      display: flex;
      align-items: center;
      padding: 0 54px 26px 48px;
      border-bottom: 1px solid #1c2226;
      color: #f7f8fa;
      font-family: Roboto, sans-serif;
    }
    button {
      padding: 0;
      border: 0;
      background: none;
      color: inherit;
      flex: none;
    }
    svg {
      display: block;
    }
    .avatar {
      margin-left: 60px;
    }
    .who {
      flex: 1;
      min-width: 0;
      margin: 0 56px 0 16px;
      display: grid;
      gap: 6px;
    }
    .name {
      margin: 0;
      font-size: 51px;
      line-height: 61px;
      font-weight: 400;
      overflow: hidden;
      text-overflow: ellipsis;
      white-space: nowrap;
    }
    .presence {
      margin: 0;
      font-size: 37px;
      line-height: 43px;
    }
    .call {
      display: flex;
      align-items: center;
      gap: 27px;
      margin: 0 57px 0 42px;
    }
    .ring-text {
      font: 700 14px Inter, sans-serif;
      fill: #0b1822;
      stroke-width: 1;
    }
    .tagline {
      font: 700 4px Inter, sans-serif;
      fill: #c9d3da;
    }
  `;

  render() {
    return html`
      <button aria-label="Back">
        <svg width="48" height="112" viewBox="0 0 48 112" fill="none" stroke="currentColor" stroke-width="6">
          <path d="M48 56H4M27 34L4 56L27 78"></path>
        </svg>
      </button>
      <button class="avatar" aria-label="Contact photo">
        <svg width="128" height="112" viewBox="0 8 128 112" overflow="visible">
          <defs>
            <path id="top-arc" d="M19.500 66A36 36 0 0 1 91.500 66"></path>
            <path id="low-arc" d="M9.500 66A46 46 0 0 0 101.500 66"></path>
            <path id="tag-arc" d="M23.500 66A32 32 0 0 0 87.500 66"></path>
            <radialGradient id="glow">
              <stop offset="0.880" stop-color="#071420"></stop>
              <stop offset="0.920" stop-color="#8797a6"></stop>
              <stop offset="1" stop-color="#0b1822"></stop>
            </radialGradient>
          </defs>
          <circle cx="55.500" cy="66" r="53" fill="url(#glow)"></circle>
          <circle cx="55.500" cy="66" r="27" fill="#051019" stroke="#5fa9cc" stroke-width="2"></circle>
          <text class="ring-text" stroke="#b9c6cf"><textPath href="#top-arc" startOffset="50%" text-anchor="middle">AESTHETIC</textPath></text>
          <text class="ring-text" stroke="#4f9fd0"><textPath href="#low-arc" startOffset="50%" text-anchor="middle">SHOES HUB</textPath></text>
          <text class="tagline"><textPath href="#tag-arc" startOffset="50%" text-anchor="middle">YOUR ULTIMATE PITCH SHOES</textPath></text>
          <path d="M29 43L36 40L42 46L47 41L51 47L56 58L58 65L50 68L44 64L29 70Q26 66 30 60L34 54Z" fill="#2b8f83"></path>
          <path d="M34 46L42 50L52 60L46 60L36 54Z" fill="#1d6660"></path>
          <path d="M29 62L37 63L34 69H27Z" fill="#5d7c45"></path>
          <path d="M53 50L60 52L68 46Q70 38 77 42L80 52L87 58L86 66L78 66L66 62L55 56Z" fill="#7b2a86"></path>
          <path d="M60 54L70 50L80 60L72 61Z" fill="#521b62"></path>
          <path d="M77 66L87 65L85 74L79 72Z" fill="#4a1a55"></path>
          <path d="M48 70L60 70L66 78L77 84V96H72L62 88L52 84L46 78Z" fill="#e8492a"></path>
          <path d="M41 82L50 84L70 92L60 94L42 91Z" fill="#a9a3a8"></path>
          <path d="M34 66Q32 73 38 71L66 59Q52 72 40 77Q32 78 34 66Z" fill="#d9b45a"></path>
          <path d="M56 68L76 68L90 60L83 70L80 77L75 71L69 76L66 71Z" fill="#2f78c4"></path>
          <path d="M72 96Q72 76 92 76H128V128H82Q72 128 72 106Z" fill="#0b1014"></path>
          <circle cx="102" cy="106" r="18" fill="none" stroke="#f7f8fa" stroke-width="4"></circle>
          <path d="M99 99L106 106L99 113" fill="none" stroke="#f7f8fa" stroke-width="4" stroke-linecap="round" stroke-linejoin="round"></path>
        </svg>
      </button>
      <div class="who">
        <h1 class="name">AESTHETIC SHOES HUB</h1>
        <p class="presence">online</p>
      </div>
      <button aria-label="Store">
        <svg width="72" height="72" viewBox="0 0 72 72" fill="none" stroke="currentColor" stroke-width="6" stroke-linejoin="round" stroke-linecap="round">
          <path d="M15 15H57M15 24H57L61 41H11ZM15 41V57H38V41M57 42V57"></path>
        </svg>
      </button>
      <div class="call">
        <button aria-label="Voice call">
          <svg width="72" height="72" viewBox="0 0 72 72" fill="none" stroke="currentColor" stroke-width="5" stroke-linejoin="round">
            <path d="M12 12H24L27 25L19 33Q26 45 39 53L48 46L60 49V60Q12 58 12 12Z"></path>
          </svg>
        </button>
        <button aria-label="Call options">
          <svg width="24" height="72" viewBox="0 0 24 72" fill="currentColor">
            <path d="M3 30H21Q25 30 24 34L14 44Q12 46 10 44L0 34Q-1 30 3 30Z"></path>
          </svg>
        </button>
      </div>
      <button aria-label="More options">
        <svg width="24" height="72" viewBox="0 0 24 72" fill="currentColor">
          <circle cx="12" cy="18" r="6"></circle>
          <circle cx="12" cy="36" r="6"></circle>
          <circle cx="12" cy="54" r="6"></circle>
        </svg>
      </button>
    `;
  }
}

@customElement("message-bubble")
export class MessageBubble extends LitElement {
  @property({ attribute: false }) message!: Message;

  static styles = css`
    :host {
      display: block;
      font-family: Roboto, sans-serif;
    }
    .bubble {
      position: relative;
      width: fit-content;
      max-width: 858px;
      border-radius: 32px;
      color: #f5f8f7;
    }
    .in {
      background: #1f272a;
      --meta: #9a9d9f;
      --quote: #1d2329;
      --accent: #23c164;
      --author: #a6e8c0;
      --quoted: #8b9295;
      --gap: 41px;
      --end: 24px;
      --drop: 7px;
      --lift: 16px;
    }
    .out {
      margin-left: auto;
      background: #144d37;
      --meta: #a1b8af;
      --quote: #154433;
      --accent: #a48fff;
      --author: #d5cffb;
      --quoted: #95afa4;
      --gap: 23px;
      --end: 27px;
      --drop: 10px;
      --lift: 13px;
    }
    .in.tailed {
      border-top-left-radius: 0;
    }
    .out.tailed {
      border-top-right-radius: 0;
    }
    .tail {
      position: absolute;
      top: 0;
      display: block;
    }
    .in .tail {
      right: 100%;
      fill: #1f272a;
    }
    .out .tail {
      left: 100%;
      fill: #144d37;
    }
    .quoting {
      padding-top: 12px;
    }
    .quote {
      box-sizing: border-box;
      min-height: 144px;
      margin: 0 12px;
      padding: 19px 25px 14px 24px;
      display: flex;
      flex-direction: column;
      justify-content: center;
      gap: 8px;
      border-left: 12px solid var(--accent);
      background: var(--quote);
      font-size: 42px;
      line-height: 49px;
      clip-path: inset(0 round 24px);
    }
    .author {
      color: var(--author);
      font-weight: 500;
    }
    .quoted {
      margin: 0;
      color: var(--quoted);
    }
    .body {
      display: grid;
      grid-template-columns: 1fr auto;
      column-gap: var(--gap);
      align-items: end;
      padding: 18px var(--end) var(--drop) 30px;
    }
    .text {
      margin: 0;
      padding-bottom: var(--lift);
      font-size: 48px;
      line-height: 57px;
    }
    .over .text,
    .below .text {
      grid-column: 1 / -1;
    }
    .over .text {
      grid-row: 1;
    }
    .over .meta {
      grid-row: 1;
      grid-column: 2;
    }
    .below .meta {
      grid-column: 2;
      margin-top: 10px;
    }
    .meta {
      display: flex;
      align-items: baseline;
      gap: 12px;
      color: var(--meta);
      font-size: 36px;
      line-height: 42px;
    }
    .day {
      width: fit-content;
      margin: 0 auto;
      padding: 20px 27px 17px;
      border-radius: 24px;
      background: #12181c;
      color: #8f9496;
      font-weight: 500;
      font-size: 37px;
      line-height: 42px;
    }
  `;

  render() {
    const m = this.message;
    if (m.kind === "day") return html`<div class="day">${m.text}</div>`;
    const out = m.kind === "out";
    return html`
      <article class="bubble ${m.kind} ${m.tail ? "tailed" : ""} ${m.quote ? "quoting" : ""}">
        ${m.tail
          ? html`<svg class="tail" width="21" height="32" viewBox="0 0 21 32" aria-hidden="true">
              ${out
                ? svg`<path d="M0 0H15Q21 1 21 6Q21 9 18 12L0 32Z"></path>`
                : svg`<path d="M21 0H6Q0 1 0 6Q0 9 3 12L21 32Z"></path>`}
            </svg>`
          : nothing}
        ${m.quote
          ? html`<div class="quote">
              <span class="author">${m.quote.author}</span>
              <p class="quoted">${m.quote.text}</p>
            </div>`
          : nothing}
        <div class="body ${m.meta ?? "beside"}">
          <p class="text">${m.text}</p>
          <span class="meta">
            <time>${m.time}</time>
            ${out
              ? html`<svg width="48" height="30" viewBox="0 0 48 30" fill="none" stroke="currentColor" stroke-width="4" role="img" aria-label="Delivered">
                  <path d="M1 17L12 28L32 1M21 23L26 28L47 1"></path>
                </svg>`
              : nothing}
          </span>
        </div>
      </article>
    `;
  }
}

@customElement("message-composer")
export class MessageComposer extends LitElement {
  static styles = css`
    :host {
      display: flex;
      align-items: flex-start;
      gap: 14px;
      padding: 0 16px 14px 14px;
    }
    button {
      padding: 0;
      border: 0;
      background: none;
      color: inherit;
      flex: none;
    }
    svg {
      display: block;
    }
    .field {
      box-sizing: border-box;
      flex: 1;
      min-width: 0;
      height: 141px;
      margin-top: 5px;
      padding: 0 40px;
      display: flex;
      align-items: center;
      border-radius: 71px;
      background: #1f272a;
      color: #8c9599;
    }
    .entry {
      flex: 1;
      min-width: 0;
      height: 73px;
      margin: 0 30px 0 42px;
      padding: 0;
      border: 0;
      outline: 0;
      background: linear-gradient(#23c164, #23c164) left / 6px 100% no-repeat;
      color: #f5f8f7;
      font: 400 54px Roboto, sans-serif;
    }
    .entry::placeholder {
      color: #8c9599;
      opacity: 1;
    }
    .tools {
      display: flex;
      gap: 84px;
    }
    .voice {
      width: 144px;
      height: 144px;
      display: grid;
      place-items: center;
      border-radius: 50%;
      background: #23c164;
      color: #0b1014;
    }
  `;

  render() {
    return html`
      <div class="field">
        <button aria-label="Stickers">
          <svg width="60" height="60" viewBox="0 0 60 60" fill="none" stroke="currentColor" stroke-width="6">
            <path d="M22 3H38Q57 3 57 22V34Q57 37 55 39L39 55Q37 57 34 57H22Q3 57 3 38V22Q3 3 22 3ZM33 57V46Q33 34 42 34H57" stroke-linejoin="round"></path>
            <circle cx="19" cy="21" r="4.500" fill="currentColor" stroke="none"></circle>
            <circle cx="41" cy="21" r="4.500" fill="currentColor" stroke="none"></circle>
            <path d="M17 34H40L33 44Q21 44 16 36Q15 34 17 34Z" fill="currentColor" stroke="none"></path>
          </svg>
        </button>
        <input class="entry" type="text" aria-label="Message" placeholder="Message" />
        <div class="tools">
          <button aria-label="Attach">
            <svg width="60" height="60" viewBox="0 0 60 60" fill="none" stroke="currentColor" stroke-width="6" stroke-linecap="round">
              <path d="M46 15V42A16 15 0 0 1 14 42V14A11.500 11.500 0 0 1 37 14V39A7 7 0 0 1 23 39V15"></path>
            </svg>
          </button>
          <button aria-label="Pay">
            <svg width="60" height="60" viewBox="0 0 60 60" fill="none" stroke="currentColor" stroke-width="6">
              <circle cx="30" cy="30" r="27"></circle>
              <path d="M21 19.500H40M21 26.500H40M21 19.500H27Q34 20 34 26.500Q34 33 27 33H23L34 45" stroke-width="4"></path>
            </svg>
          </button>
          <button aria-label="Camera">
            <svg width="60" height="60" viewBox="0 0 60 60" fill="none" stroke="currentColor" stroke-width="6" stroke-linejoin="round">
              <path d="M3 12H16L22 6H38L44 12H57V54H3Z"></path>
              <circle cx="30" cy="33" r="10.500"></circle>
            </svg>
          </button>
        </div>
      </div>
      <button class="voice" aria-label="Record voice message">
        <svg width="60" height="68" viewBox="0 0 60 68" fill="none" stroke="currentColor" stroke-width="6" stroke-linecap="round">
          <rect x="21" y="4" width="18" height="37" rx="9" fill="currentColor" stroke="none"></rect>
          <path d="M12 34A18 16 0 0 0 48 34M30 51V58"></path>
        </svg>
      </button>
    `;
  }
}

@customElement("system-nav")
export class SystemNav extends LitElement {
  static styles = css`
    :host {
      display: flex;
      align-items: center;
      justify-content: center;
      gap: 198px;
      height: 132px;
      padding-right: 20px;
      background: #000;
      color: #999;
    }
    button {
      padding: 0;
      border: 0;
      background: none;
      color: inherit;
    }
    svg {
      display: block;
    }
  `;

  render() {
    const frame = (label: string, shape: unknown) => html`<button aria-label=${label}>
      <svg width="60" height="60" viewBox="0 0 60 60" fill="none" stroke="currentColor" stroke-width="7" stroke-linejoin="round">${shape}</svg>
    </button>`;
    return html`
      ${frame("Recent apps", svg`<rect x="9.500" y="9.500" width="41" height="41" rx="7"></rect>`)}
      ${frame("Home", svg`<circle cx="30" cy="30" r="20.500"></circle>`)}
      ${frame("Back", svg`<path d="M49 9.500V50.500L13 30Z"></path>`)}
    `;
  }
}

@customElement("app-root")
export class AppRoot extends LitElement {
  static styles = css`
    :host {
      display: flex;
      flex-direction: column;
      min-height: 100vh;
      background: #0b1014;
      font-family: Roboto, sans-serif;
    }
    .chat {
      position: relative;
      flex: 1;
      display: flex;
    }
    .wallpaper {
      position: absolute;
      inset: 0;
    }
    .content {
      position: relative;
      flex: 1;
      min-width: 0;
      display: flex;
      flex-direction: column;
      justify-content: flex-end;
    }
    .thread {
      position: relative;
      display: flex;
      flex-direction: column;
      gap: 30px;
      padding: 16px 51px 7px;
    }
    .follow {
      margin-top: -22px;
    }
    .break {
      margin: 2px 0;
    }
    .floating-day {
      position: absolute;
      top: 7px;
      left: 50%;
      transform: translateX(-50%);
      padding: 21px 27px 17px;
      border-radius: 24px;
      background: #12181c;
      color: #8f9496;
      font-weight: 500;
      font-size: 39px;
      line-height: 46px;
    }
    .jump {
      position: absolute;
      right: 36px;
      bottom: 55px;
      width: 96px;
      height: 96px;
      padding: 0;
      display: grid;
      place-items: center;
      border: 0;
      border-radius: 50%;
      background: #29323a;
      color: #9299a0;
      box-shadow: 0 3px 6px rgba(0, 0, 0, 0.3);
    }
    .scroll-mark {
      position: absolute;
      right: 6px;
      bottom: 569px;
      width: 12px;
      height: 144px;
      background: rgba(255, 255, 255, 0.11);
    }
  `;

  render() {
    return html`
      <status-bar></status-bar>
      <chat-header></chat-header>
      <main class="chat">
        <doodle-wallpaper class="wallpaper"></doodle-wallpaper>
        <div class="content">
          <div class="thread">
            ${MESSAGES.map(
              (m) => html`<message-bubble
                class=${m.kind === "day" ? "break" : m.tail ? "" : "follow"}
                .message=${m}
              ></message-bubble>`
            )}
            <button class="jump" aria-label="Jump to latest">
              <svg width="48" height="48" viewBox="0 0 48 48" fill="none" stroke="currentColor" stroke-width="5" stroke-linecap="round" stroke-linejoin="round">
                <path d="M10 9L24 23L38 9M10 27L24 41L38 27"></path>
              </svg>
            </button>
          </div>
          <message-composer></message-composer>
        </div>
        <div class="floating-day">Thursday</div>
        <div class="scroll-mark"></div>
      </main>
      <system-nav></system-nav>
    `;
  }
}
